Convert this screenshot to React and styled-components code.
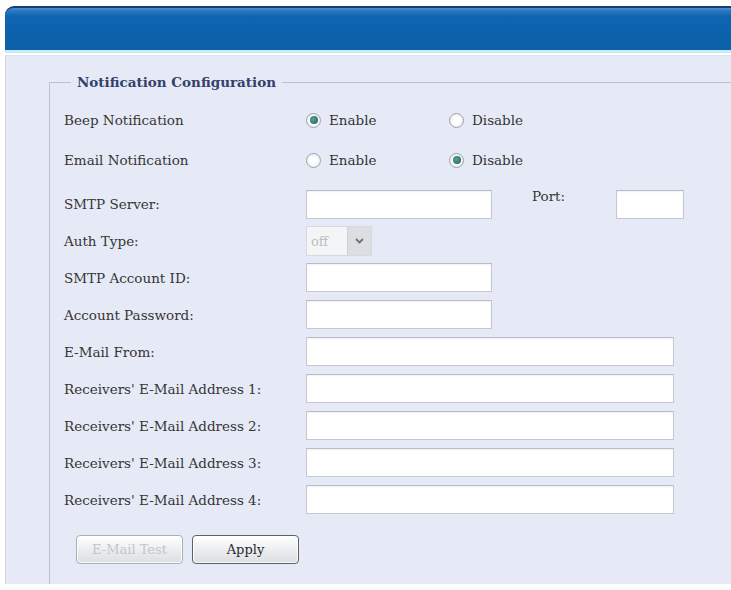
import React from "react";
import styled, { createGlobalStyle } from "styled-components";

const Global = createGlobalStyle`
  html, body { margin: 0; padding: 0; background: #ffffff; }
  body { font-family: "DejaVu Serif", "Liberation Serif", serif; overflow: hidden; }
`;

const Page = styled.div`
  width: 731px;
  height: 590px;
  padding: 6px 0 0 5px;
  box-sizing: border-box;
`;

const TopBar = styled.div`
  height: 42px;
  border-top-left-radius: 9px;
  border-top: 2px solid #163f74;
  background: linear-gradient(#4b8ed0 0, #2a78c0 3px, #0f65b0 8px, #0c5fa9 100%);
  border-bottom: 3px solid #c6eef6;
`;

const Panel = styled.div`
  height: 529px;
  margin-top: 2px;
  background: #e6eaf6;
  border-left: 1px solid #cfd5e4;
  border-top: 1px solid #dfe3ef;
  overflow: hidden;
  padding: 18px 0 0 43px;
  box-sizing: border-box;
`;

const Fieldset = styled.fieldset`
  margin: 0;
  padding: 10px 0 40px 14px;
  border: none;
  border-top: 1px solid #bcc2d2;
  border-left: 1px solid #bcc2d2;
  min-width: 0;
`;

const Legend = styled.legend`
  padding: 0 6px;
  margin-left: 7px;
  font-weight: bold;
  font-size: 13.5px;
  color: #34406b;
`;

const Row = styled.div`
  display: grid;
  grid-template-columns: 242px 1fr;
  align-items: center;
  box-sizing: border-box;
  height: ${(p) => p.h || 37}px;
  padding-top: ${(p) => p.pt || 0}px;
`;

const Label = styled.div`
  font-size: 13.5px;
  color: #353535;
`;

const Choices = styled.div`
  display: flex;
  align-items: center;
`;

const Choice = styled.label`
  display: flex;
  align-items: center;
  gap: 8px;
  width: 143px;
  font-size: 13.5px;
  color: #353535;
`;

const Radio = styled.span`
  width: 15px;
  height: 15px;
  border-radius: 50%;
  box-sizing: border-box;
  border: 1px solid #9ca2ac;
  background: radial-gradient(circle, #ffffff 35%, #dfe2e7 100%);
  display: flex;
  align-items: center;
  justify-content: center;
  &::after {
    content: "";
    width: 8px;
    height: 8px;
    border-radius: 50%;
    background: ${(p) => (p.checked ? "radial-gradient(circle at 40% 40%, #5aa39a, #1e5a52)" : "transparent")};
  }
`;

const Field = styled.div`
  display: flex;
  align-items: center;
`;

const Input = styled.input`
  box-sizing: border-box;
  width: ${(p) => p.w}px;
  height: 29px;
  margin: 0;
  border: 1px solid #c4c8d0;
  border-top-color: #b8bcc6;
  background: #ffffff;
  box-shadow: inset 0 1px 2px rgba(0, 0, 0, 0.06);
  outline: none;
`;

const PortLabel = styled.span`
  font-size: 13.5px;
  color: #353535;
  margin: -2px 0 0 40px;
  width: 84px;
  align-self: flex-start;
`;

const Select = styled.div`
  display: flex;
  width: 66px;
  height: 30px;
  box-sizing: border-box;
  border: 1px solid #d6d9df;
  background: #f4f5f7;
`;

const SelectValue = styled.span`
  flex: 1;
  font-size: 13px;
  color: #b8bcc2;
  padding: 7px 0 0 4px;
`;

const SelectArrow = styled.span`
  width: 23px;
  background: #dcdee2;
  border-left: 1px solid #cfd2d8;
  display: flex;
  align-items: center;
  justify-content: center;
`;

const Buttons = styled.div`
  display: flex;
  gap: 9px;
  margin: 17px 0 0 12px;
`;

const Button = styled.button`
  width: 107px;
  height: 29px;
  border-radius: 4px;
  font-family: inherit;
  font-size: 13px;
  border: 1px solid ${(p) => (p.disabled ? "#a9b0b8" : "#5c6168")};
  color: ${(p) => (p.disabled ? "#c2c6cb" : "#2a2a2a")};
  background: linear-gradient(#ffffff, #eceef0 50%, #dcdfe3);
  box-shadow: inset 0 0 0 1px rgba(255, 255, 255, 0.8);
`;

const emails = [1, 2, 3, 4];

export default function App() {
  return (
    <Page>
      <Global />
      <TopBar />
      <Panel>
        <Fieldset>
          <Legend>Notification Configuration</Legend>
          <Row h={40}>
            <Label>Beep Notification</Label>
            <Choices>
              <Choice><Radio checked />Enable</Choice>
              <Choice><Radio />Disable</Choice>
            </Choices>
          </Row>
          <Row h={40}>
            <Label>Email Notification</Label>
            <Choices>
              <Choice><Radio />Enable</Choice>
              <Choice><Radio checked />Disable</Choice>
            </Choices>
          </Row>
          <Row h={42} pt={6}>
            <Label>SMTP Server:</Label>
            <Field>
              <Input w={186} />
              <PortLabel>Port:</PortLabel>
              <Input w={68} />
            </Field>
          </Row>
          <Row>
            <Label>Auth Type:</Label>
            <Field>
              <Select>
                <SelectValue>off</SelectValue>
                <SelectArrow>
                  <svg width="9" height="6" viewBox="0 0 9 6">
                    <path d="M1 1 L4.5 4.5 L8 1" fill="none" stroke="#6d7079" strokeWidth="1.8" />
                  </svg>
                </SelectArrow>
              </Select>
            </Field>
          </Row>
          <Row>
            <Label>SMTP Account ID:</Label>
            <Field><Input w={186} /></Field>
          </Row>
          <Row>
            <Label>Account Password:</Label>
            <Field><Input w={186} /></Field>
          </Row>
          <Row>
            <Label>E-Mail From:</Label>
            <Field><Input w={368} /></Field>
          </Row>
          {emails.map((n) => (
            <Row key={n}>
              <Label>Receivers' E-Mail Address {n}:</Label>
              <Field><Input w={368} /></Field>
            </Row>
          ))}
          <Buttons>
            <Button disabled>E-Mail Test</Button>
            <Button>Apply</Button>
          </Buttons>
        </Fieldset>
      </Panel>
    </Page>
  );
}
